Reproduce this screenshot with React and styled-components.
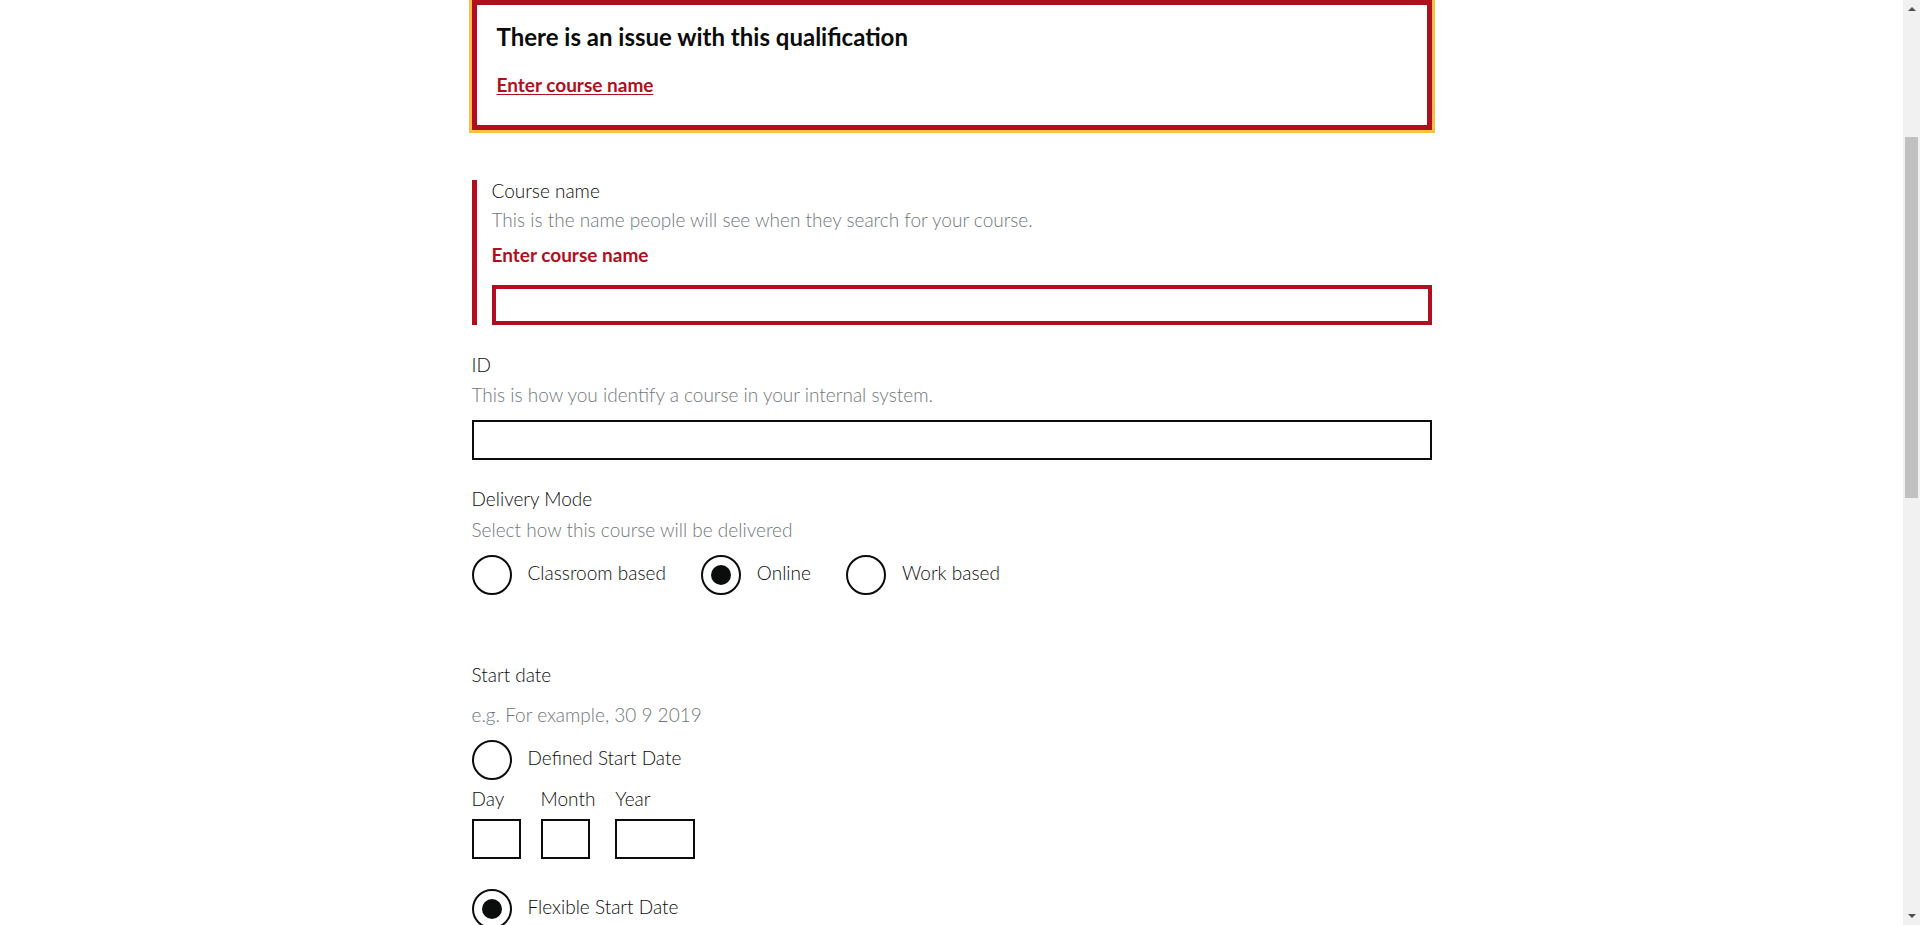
import React from "react";
import styled, { createGlobalStyle, css } from "styled-components";

const TEXT = "#0b0c0c";
const HINT = "#6f777b";
const ERROR = "#b10e1e";
const FOCUS = "#ffbf47";
const FONT = `"Lato", "Liberation Sans", Arial, sans-serif`;

const GlobalStyle = createGlobalStyle`
  html, body { margin: 0; padding: 0; background: #ffffff; }
  body { font-family: ${FONT}; color: ${TEXT}; -webkit-font-smoothing: antialiased; }
  * { box-sizing: border-box; }
`;

const Page = styled.div`
  padding-right: 17px;
`;

const Container = styled.main`
  width: 960px;
  margin: 0 auto;
`;

/* drawing of the browser scrollbar that is visible in the screenshot */
const ScrollTrack = styled.div`
  position: fixed;
  top: 0;
  right: 0;
  width: 17px;
  height: 100vh;
  background: #f1f1f1;
  display: flex;
  flex-direction: column;
  align-items: center;
  justify-content: space-between;
`;

const ScrollArrow = styled.div`
  width: 17px;
  height: 17px;
  display: flex;
  align-items: center;
  justify-content: center;
`;

const ScrollThumb = styled.div`
  position: absolute;
  top: 137px;
  left: 2px;
  width: 13px;
  height: 361px;
  background: #c1c1c1;
`;

const ErrorSummary = styled.div`
  border: 5px solid ${ERROR};
  outline: 3px solid ${FOCUS};
  padding: 17px 20px 28px;
  margin-bottom: 50px;
`;

const SummaryTitle = styled.h2`
  margin: 0 0 20px;
  font-size: 24px;
  line-height: 30px;
  font-weight: 700;
`;

const SummaryList = styled.ul`
  list-style: none;
  margin: 0;
  padding: 0;
`;

const SummaryLink = styled.a`
  font-size: 19px;
  line-height: 25px;
  font-weight: 700;
  color: ${ERROR};
  text-decoration: underline;
  text-underline-offset: 2px;
`;

const FormGroup = styled.div`
  margin-bottom: ${(p) => p.$mb ?? 30}px;
  ${(p) =>
    p.$error &&
    css`
      border-left: 5px solid ${ERROR};
      padding-left: 15px;
    `}
`;

const textBase = css`
  font-size: 19px;
  line-height: 21px;
  font-weight: 300;
`;

const Label = styled.label`
  display: block;
  ${textBase};
  margin-bottom: ${(p) => p.$mb ?? 8}px;
`;

const Hint = styled.div`
  ${textBase};
  color: ${HINT};
  margin-bottom: ${(p) => p.$mb ?? 15}px;
`;

const ErrorMessage = styled.span`
  display: block;
  ${textBase};
  font-weight: 700;
  color: ${ERROR};
  margin-bottom: 20px;
`;

const TextInput = styled.input`
  display: block;
  width: ${(p) => (p.$width ? `${p.$width}px` : "100%")};
  height: 40px;
  margin: 0;
  padding: 5px;
  font-family: ${FONT};
  font-size: 19px;
  border: ${(p) => (p.$error ? `4px solid ${ERROR}` : `2px solid ${TEXT}`)};
  border-radius: 0;
  background: #fff;
  outline: none;
`;

const Fieldset = styled.fieldset`
  border: 0;
  margin: 0;
  padding: 0;
  min-width: 0;
`;

const Legend = styled.legend`
  padding: 0;
  ${textBase};
  margin-bottom: ${(p) => p.$mb ?? 9}px;
`;

const Radios = styled.div`
  display: flex;
  flex-direction: ${(p) => (p.$inline ? "row" : "column")};
  align-items: flex-start;
`;

const RadioItem = styled.label`
  display: flex;
  align-items: flex-start;
  min-height: 40px;
  margin-right: ${(p) => (p.$inline ? 20 : 0)}px;
  cursor: pointer;
`;

const RadioCircle = styled.span`
  flex: none;
  width: 40px;
  height: 40px;
  border: 2px solid ${TEXT};
  border-radius: 50%;
  display: flex;
  align-items: center;
  justify-content: center;
  background: #fff;

  &::after {
    content: "";
    width: 20px;
    height: 20px;
    border-radius: 50%;
    background: ${TEXT};
    opacity: ${(p) => (p.$checked ? 1 : 0)};
  }
`;

const RadioText = styled.span`
  padding: 7px 15px 5px 16px;
  ${textBase};
`;

const DateRow = styled.div`
  display: flex;
  gap: 20px;
  margin: 8px 0 30px;
`;

const DateItem = styled.div`
  display: flex;
  flex-direction: column;
`;

const DateLabel = styled.label`
  ${textBase};
  margin-bottom: 10px;
`;

function Radio({ label, checked, inline }) {
  return (
    <RadioItem $inline={inline}>
      <RadioCircle $checked={checked} />
      <RadioText>{label}</RadioText>
    </RadioItem>
  );
}

function Scrollbar() {
  return (
    <ScrollTrack aria-hidden="true">
      <ScrollArrow>
        <svg width="8" height="5" viewBox="0 0 8 5">
          <path d="M0 5 L4 1 L8 5 Z" fill="#505050" />
        </svg>
      </ScrollArrow>
      <ScrollThumb />
      <ScrollArrow>
        <svg width="8" height="5" viewBox="0 0 8 5">
          <path d="M0 0 L4 4 L8 0 Z" fill="#505050" />
        </svg>
      </ScrollArrow>
    </ScrollTrack>
  );
}

export default function App() {
  return (
    <Page>
      <GlobalStyle />
      <Container>
        <ErrorSummary role="alert">
          <SummaryTitle>There is an issue with this qualification</SummaryTitle>
          <SummaryList>
            <li>
              <SummaryLink href="#course-name">Enter course name</SummaryLink>
            </li>
          </SummaryList>
        </ErrorSummary>

        <FormGroup $error $mb={29}>
          <Label htmlFor="course-name" $mb={8}>Course name</Label>
          <Hint $mb={14}>This is the name people will see when they search for your course.</Hint>
          <ErrorMessage>Enter course name</ErrorMessage>
          <TextInput id="course-name" $error />
        </FormGroup>

        <FormGroup $mb={28}>
          <Label htmlFor="course-id" $mb={9}>ID</Label>
          <Hint $mb={15}>This is how you identify a course in your internal system.</Hint>
          <TextInput id="course-id" />
        </FormGroup>

        <FormGroup $mb={69}>
          <Fieldset>
            <Legend $mb={10}>Delivery Mode</Legend>
            <Hint $mb={15}>Select how this course will be delivered</Hint>
            <Radios $inline>
              <Radio inline label="Classroom based" />
              <Radio inline label="Online" checked />
              <Radio inline label="Work based" />
            </Radios>
          </Fieldset>
        </FormGroup>

        <FormGroup>
          <Fieldset>
            <Legend $mb={19}>Start date</Legend>
            <Hint $mb={15}>e.g. For example, 30 9 2019</Hint>
            <Radios>
              <Radio label="Defined Start Date" />
              <DateRow>
                <DateItem>
                  <DateLabel htmlFor="day">Day</DateLabel>
                  <TextInput id="day" $width={49} />
                </DateItem>
                <DateItem>
                  <DateLabel htmlFor="month">Month</DateLabel>
                  <TextInput id="month" $width={49} />
                </DateItem>
                <DateItem>
                  <DateLabel htmlFor="year">Year</DateLabel>
                  <TextInput id="year" $width={80} />
                </DateItem>
              </DateRow>
              <Radio label="Flexible Start Date" checked />
            </Radios>
          </Fieldset>
        </FormGroup>
      </Container>
      <Scrollbar />
    </Page>
  );
}
